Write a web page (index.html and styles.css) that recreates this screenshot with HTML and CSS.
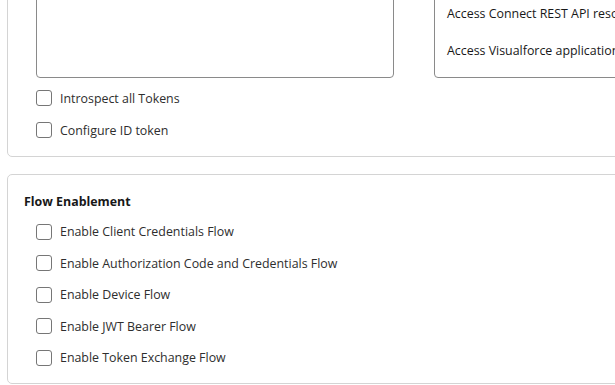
FILE: index.html
```html
<!DOCTYPE html>
<html>
<head>
<meta charset="utf-8">
<link rel="stylesheet" href="styles.css">
</head>
<body>
<div class="page">
  <section class="panel panel-top">
    <div class="scope-row">
      <div class="textbox"></div>
      <ul class="scope-list">
        <li>Access the identity URL service</li>
        <li>Access Connect REST API resources</li>
        <li>Access Visualforce applications</li>
      </ul>
    </div>
    <div class="checks">
      <label class="check"><span class="box"></span><span>Introspect all Tokens</span></label>
      <label class="check"><span class="box"></span><span>Configure ID token</span></label>
    </div>
  </section>
  <section class="panel panel-flow">
    <h3 class="heading">Flow Enablement</h3>
    <div class="flow-checks">
      <label class="check"><span class="box"></span><span>Enable Client Credentials Flow</span></label>
      <label class="check"><span class="box"></span><span>Enable Authorization Code and Credentials Flow</span></label>
      <label class="check"><span class="box"></span><span>Enable Device Flow</span></label>
      <label class="check"><span class="box"></span><span>Enable JWT Bearer Flow</span></label>
      <label class="check"><span class="box"></span><span>Enable Token Exchange Flow</span></label>
    </div>
  </section>
</div>
</body>
</html>
```

FILE: styles.css
```css
html, body {
  margin: 0;
  padding: 0;
  background: #ffffff;
  overflow: hidden;
}
body {
  font-family: "Open Sans", "Noto Sans", sans-serif;
  font-size: 12.4px;
  color: #2e2e2e;
}
.page {
  width: 760px;
  padding: 0 7px;
  margin-top: -60px;
  display: flex;
  flex-direction: column;
  gap: 17px;
}
.panel {
  border: 1px solid #d4d4d4;
  border-radius: 5px;
  background: #fff;
}
.panel-top {
  padding: 16px 0 10px 28px;
}
.scope-row {
  display: flex;
  gap: 40px;
  align-items: stretch;
}
.textbox {
  width: 356px;
  height: 119px;
  border: 1px solid #8a8a8a;
  border-radius: 4px;
  flex: none;
}
.scope-list {
  list-style: none;
  margin: 0;
  padding: 0 12px;
  width: 300px;
  border: 1px solid #8a8a8a;
  border-radius: 4px;
}
.scope-list li {
  line-height: 37px;
  white-space: nowrap;
  color: #181818;
}
.checks {
  margin-top: 4px;
  display: flex;
  flex-direction: column;
}
.check {
  display: flex;
  align-items: center;
  gap: 8px;
  height: 32px;
}
.flow-checks .check {
  height: 31.5px;
}
.box {
  width: 14px;
  height: 14px;
  border: 1px solid #767676;
  border-radius: 3px;
  flex: none;
}
.panel-flow {
  padding: 17px 0 9px 16px;
}
.heading {
  margin: 0 0 4px 0;
  font-size: 12.4px;
  font-weight: 700;
  line-height: 20px;
  color: #181818;
}
.flow-checks {
  padding-left: 12px;
  display: flex;
  flex-direction: column;
}
```
